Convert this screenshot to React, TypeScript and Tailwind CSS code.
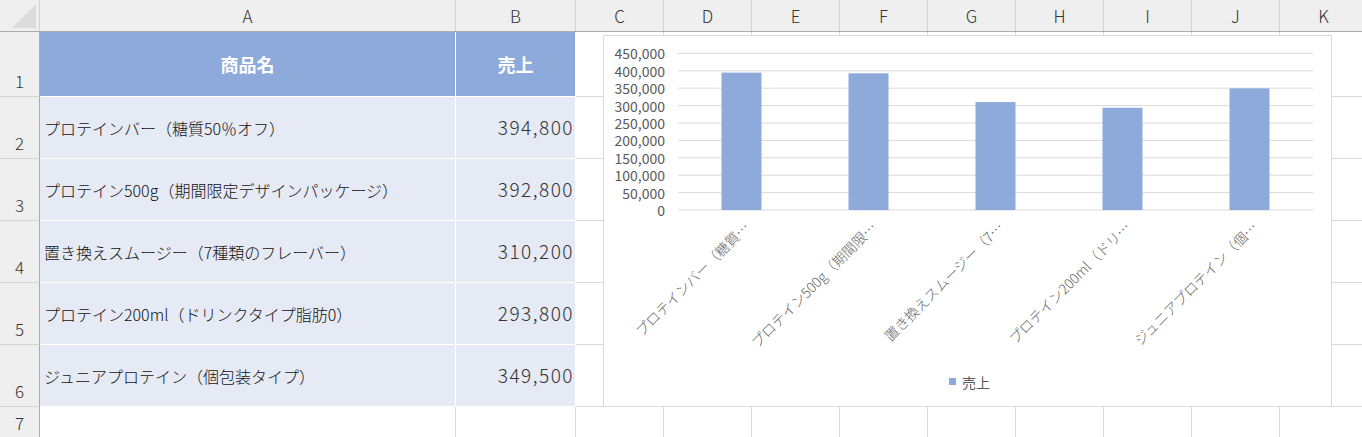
import React from "react";

const products = [
  { name: "プロテインバー（糖質50％オフ）", value: 394800, short: "プロテインバー（糖質…" },
  { name: "プロテイン500g（期間限定デザインパッケージ）", value: 392800, short: "プロテイン500g（期間限…" },
  { name: "置き換えスムージー（7種類のフレーバー）", value: 310200, short: "置き換えスムージー（7…" },
  { name: "プロテイン200ml（ドリンクタイプ脂肪0）", value: 293800, short: "プロテイン200ml（ドリ…" },
  { name: "ジュニアプロテイン（個包装タイプ）", value: 349500, short: "ジュニアプロテイン（個…" },
];

const extraCols = ["C", "D", "E", "F", "G", "H", "I", "J", "K"];

// chart geometry (svg coords, origin at chart inner top-left)
const plotLeft = 74;
const plotRight = 709;
const baseY = 174;
const step = 17.4;
const maxVal = 450000;
const catW = (plotRight - plotLeft) / products.length;

function RowHead({ n, h }: { n: number; h: string }) {
  return (
    <div className={`w-[40px] shrink-0 ${h} border-r border-b border-r-[#ababab] border-b-[#d4d4d4] bg-[#efefef] flex items-end justify-center pb-[5px] text-[17px] leading-[20px] text-[#333] font-light`}>
      {n}
    </div>
  );
}

function EmptyCells() {
  return (
    <>
      {extraCols.map((c) => (
        <div key={c} className="w-[88px] shrink-0 border-r border-b border-[#dadada]" />
      ))}
    </>
  );
}

function Chart() {
  const ticks = Array.from({ length: 10 }, (_, i) => i * 50000);
  return (
    <div className="absolute left-[603px] top-[35px] w-[729px] h-[372px] border border-[#d9d9d9] bg-white">
      <svg width="727" height="370" className="block">
        {ticks.map((t, i) => {
          const y = baseY - i * step;
          return (
            <g key={t}>
              <line x1={plotLeft} x2={plotRight} y1={y} y2={y} stroke="#d9d9d9" strokeWidth="1" />
              <text x="61" y={y} textAnchor="end" dominantBaseline="central" fontSize="14" fill="#595959">
                {t.toLocaleString("en-US")}
              </text>
            </g>
          );
        })}
        {products.map((p, i) => {
          const cx = plotLeft + catW * (i + 0.5);
          const h = (p.value / maxVal) * step * 9;
          const px = cx + 5;
          const py = baseY + 14;
          return (
            <g key={p.name}>
              <rect x={cx - 20} y={baseY - h} width="40" height={h} fill="#8eaadb" />
              <text
                x={px}
                y={py}
                textAnchor="end"
                dominantBaseline="central"
                fontSize="14"
                fill="#666"
                fontWeight="300"
                transform={`rotate(-45 ${px} ${py})`}
              >
                {p.short}
              </text>
            </g>
          );
        })}
        <rect x="345" y="342" width="7" height="7" fill="#8eaadb" />
        <text x="358" y="346" dominantBaseline="central" fontSize="14" fill="#595959">
          売上
        </text>
      </svg>
    </div>
  );
}

export default function App() {
  return (
    <div className="relative w-[1362px] h-[437px] overflow-hidden bg-white font-['Noto_Sans_CJK_JP',sans-serif]">
      {/* column headers */}
      <div className="flex h-[32px] border-b border-[#ababab] bg-[#efefef] text-[17px] text-[#333] font-light">
        <div className="w-[40px] shrink-0 border-r border-[#d4d4d4] relative">
          <svg width="39" height="31" className="block">
            <polygon points="12,28 36,4 36,28" fill="#dcdcdc" />
          </svg>
        </div>
        <div className="w-[416px] shrink-0 border-r border-[#d4d4d4] flex items-center justify-center">A</div>
        <div className="w-[120px] shrink-0 border-r border-[#d4d4d4] flex items-center justify-center">B</div>
        {extraCols.map((c) => (
          <div key={c} className="w-[88px] shrink-0 border-r border-[#d4d4d4] flex items-center justify-center">
            {c}
          </div>
        ))}
      </div>

      {/* row 1: table header */}
      <div className="flex h-[65px]">
        <RowHead n={1} h="h-[65px]" />
        <div className="w-[416px] shrink-0 border-r border-b border-white bg-[#8eaadb] flex items-center justify-center text-[18px] font-bold text-white">
          商品名
        </div>
        <div className="w-[120px] shrink-0 border-r border-b border-white bg-[#8eaadb] flex items-center justify-center text-[18px] font-bold text-white">
          売上
        </div>
        <EmptyCells />
      </div>

      {products.map((p, i) => (
        <div key={p.name} className="flex h-[62px]">
          <RowHead n={i + 2} h="h-[62px]" />
          <div className="w-[416px] shrink-0 border-r border-b border-white bg-[#e6eaf5] flex items-center pl-[4px] text-[16px] font-light text-[#111] whitespace-nowrap">
            {p.name}
          </div>
          <div className="w-[120px] shrink-0 border-r border-b border-white bg-[#e6eaf5] flex items-center justify-end pr-[1px] text-[19px] font-light tracking-[1.5px] text-[#333]">
            {p.value.toLocaleString("en-US")}
          </div>
          <EmptyCells />
        </div>
      ))}

      {/* row 7 */}
      <div className="flex h-[40px]">
        <div className="w-[40px] shrink-0 h-[31px] border-r border-[#ababab] bg-[#efefef] flex items-end justify-center pb-[5px] text-[17px] leading-[20px] text-[#333] font-light">
          7
        </div>
        <div className="w-[416px] shrink-0 border-r border-[#dadada]" />
        <div className="w-[120px] shrink-0 border-r border-[#dadada]" />
        {extraCols.map((c) => (
          <div key={c} className="w-[88px] shrink-0 border-r border-[#dadada]" />
        ))}
      </div>

      <Chart />
    </div>
  );
}
